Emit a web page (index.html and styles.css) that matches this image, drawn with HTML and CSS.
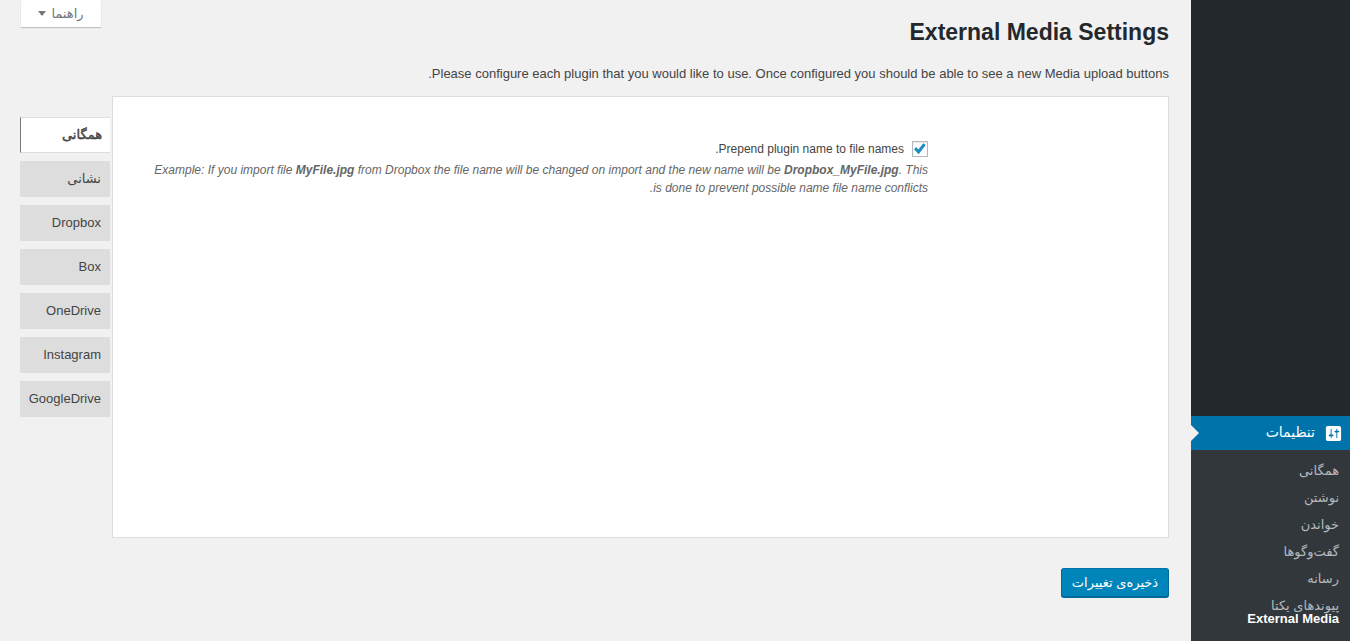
FILE: index.html
```html
<!DOCTYPE html>
<html lang="fa" dir="rtl">
<head>
<meta charset="utf-8">
<title>External Media Settings</title>
<link rel="stylesheet" href="styles.css">
</head>
<body>
<div class="layout">
  <aside class="sidebar">
    <div class="menu-spacer"></div>
    <div class="menu-current">
      <svg class="menu-icon" width="19" height="19" viewBox="0 0 20 20" aria-hidden="true"><path d="M18 16V4c0-1.100-.9-2-2-2H4c-1.100 0-2 .9-2 2v12c0 1.100.9 2 2 2h12c1.100 0 2-.9 2-2zM8 11h1c.55 0 1 .45 1 1s-.45 1-1 1H8v1.500c0 .28-.22.5-.5.5s-.5-.22-.5-.5V13H6c-.55 0-1-.45-1-1s.45-1 1-1h1V5.500c0-.28.22-.5.5-.5s.5.22.5.5V11zm5-2h-1c-.55 0-1-.45-1-1s.45-1 1-1h1V5.500c0-.28.22-.5.5-.5s.5.22.5.5V7h1c.55 0 1 .45 1 1s-.45 1-1 1h-1v5.500c0 .28-.22.5-.5.5s-.5-.22-.5-.5V9z" fill="#fff" fill-rule="evenodd"/></svg>
      <span>تنظیمات</span>
    </div>
    <ul class="submenu">
      <li>همگانی</li>
      <li>نوشتن</li>
      <li>خواندن</li>
      <li>گفت‌وگوها</li>
      <li>رسانه</li>
      <li class="sub-tight">پیوندهای یکتا</li>
      <li class="sub-active">External Media</li>
    </ul>
  </aside>
  <main class="main">
    <div class="help-row"><button class="help-btn" type="button">راهنما<span class="caret"></span></button></div>
    <h1 class="title">External Media Settings</h1>
    <p class="intro">Please configure each plugin that you would like to use. Once configured you should be able to see a new Media upload buttons.</p>
    <div class="tabs-area">
      <section class="panel">
        <div class="field">
          <label class="check-row"><span class="checkbox"><svg width="14" height="14" viewBox="0 0 14 14" aria-hidden="true"><path d="M1 7.200l2.200-2.100 2.200 2.400 5-6.300 2.300 1.800-7 9.300z" fill="#1e8cbe"/></svg></span>Prepend plugin name to file names.</label>
          <p class="desc">Example: If you import file <b>MyFile.jpg</b> from Dropbox the file name will be changed on import and the new name will be <b>Dropbox_MyFile.jpg</b>. This is done to prevent possible name file name conflicts.</p>
        </div>
      </section>
      <nav class="tabs">
        <a class="tab tab-active">همگانی</a>
        <a class="tab">نشانی</a>
        <a class="tab">Dropbox</a>
        <a class="tab">Box</a>
        <a class="tab">OneDrive</a>
        <a class="tab">Instagram</a>
        <a class="tab">GoogleDrive</a>
      </nav>
    </div>
    <div class="save-row"><button class="save-btn" type="button">ذخیره‌ی تغییرات</button></div>
  </main>
</div>
</body>
</html>
```
FILE: styles.css
```css
* { box-sizing: border-box; }
html, body { margin: 0; height: 641px; overflow: hidden; }
body {
  background: #f1f1f1;
  color: #444;
  font-family: "Liberation Sans", "DejaVu Sans", sans-serif;
  font-size: 13px;
  line-height: 1.4;
}
.layout { display: flex; height: 641px; }
.sidebar {
  width: 159px;
  flex: none;
  background: #23282d;
  display: flex;
  flex-direction: column;
}
.menu-spacer { height: 416px; flex: none; }
.menu-current {
  height: 34px;
  flex: none;
  background: #0073aa;
  color: #fff;
  font-size: 14px;
  display: flex;
  align-items: center;
  gap: 9px;
  padding-right: 7px;
  position: relative;
}
.menu-current::before {
  content: "";
  position: absolute;
  left: 0;
  top: 9px;
  border-style: solid;
  border-width: 8px 0 8px 8px;
  border-color: transparent transparent transparent #f1f1f1;
}
.menu-icon { flex: none; }
.submenu {
  list-style: none;
  margin: 0;
  padding: 7px 11px 0 0;
  background: #32373c;
  flex: 1;
  color: #b4b9be;
  font-size: 13px;
}
.submenu li { height: 27px; line-height: 27px; }
.submenu .sub-tight { height: 22px; line-height: 16px; padding-top: 6px; }
.submenu .sub-active { color: #fff; font-weight: 700; height: 10px; line-height: 10px; }
.main {
  flex: 1;
  min-width: 0;
  padding: 0 22px 0 20px;
}
.help-row { height: 27px; display: flex; justify-content: flex-end; }
.help-btn {
  width: 80px;
  height: 27px;
  margin: 0 0 0 1px;
  padding: 0;
  background: #fff;
  border: 0;
  box-shadow: 0 1px 1px rgba(0,0,0,.2);
  color: #72777c;
  font: 13px "Liberation Sans", "DejaVu Sans", sans-serif;
  display: flex;
  align-items: center;
  justify-content: center;
  gap: 5px;
}
.caret {
  width: 0;
  height: 0;
  margin-top: -1px;
  border-style: solid;
  border-width: 5px 4px 0;
  border-color: #72777c transparent transparent;
}
.title {
  margin: -9px 0 0;
  font-size: 23px;
  line-height: 29px;
  font-weight: 700;
  color: #23282d;
}
.intro { margin: 18px 0 0; height: 18px; line-height: 18px; }
.tabs-area { display: flex; margin-top: 13px; align-items: flex-start; }
.panel {
  width: 1057px;
  height: 442px;
  flex: none;
  background: #fff;
  border: 1px solid #ddd;
  padding: 42px 240px 0 35px;
}
.check-row { display: flex; align-items: center; height: 20px; color: #444; font-size: 12px; }
.checkbox {
  width: 16px;
  height: 16px;
  margin-left: 8px;
  border: 1px solid #b4b9be;
  background: #fff;
  display: flex;
  align-items: center;
  justify-content: center;
  box-shadow: inset 0 1px 2px rgba(0,0,0,.1);
}
.desc { margin: 2px 0 0; font-size: 12px; line-height: 18px; font-style: italic; color: #666; }
.tabs { flex: 1; display: flex; flex-direction: column; gap: 8px; padding-top: 21px; padding-right: 2px; }
.tab {
  height: 36px;
  line-height: 36px;
  background: #ddd;
  padding-right: 9px;
  color: #444;
}
.tab-active {
  background: #fff;
  border-left: 1px solid #777;
  -webkit-text-stroke: .45px #444;
  border-top: 1px solid #ddd;
  border-bottom: 1px solid #ddd;
  padding-right: 8px;
  line-height: 33px;
}
.save-row { margin-top: 30px; }
.save-btn {
  display: block;
  width: 108px;
  height: 29px;
  padding: 0;
  background: #0085ba;
  border: 1px solid;
  border-color: #0073aa #006799 #006799;
  border-radius: 3px;
  box-shadow: 0 1px 0 #006799;
  color: #fff;
  font: 13px "Liberation Sans", "DejaVu Sans", sans-serif;
}
```
